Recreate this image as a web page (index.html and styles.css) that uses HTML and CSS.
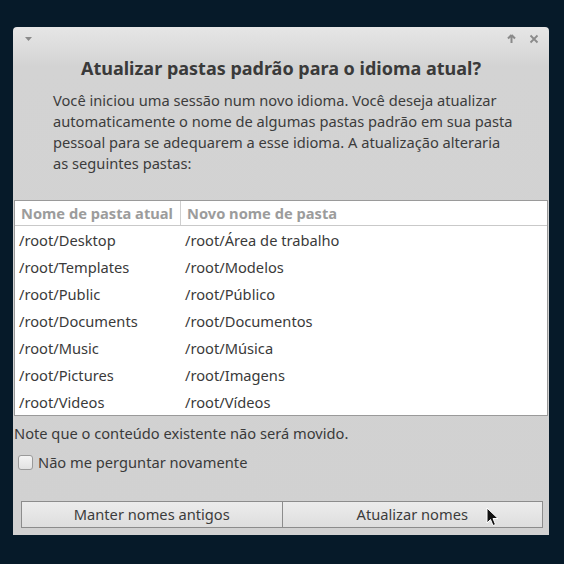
FILE: index.html
```html
<!DOCTYPE html>
<html lang="pt">
<head>
<meta charset="utf-8">
<link rel="stylesheet" href="styles.css">
</head>
<body>
<div class="desktop">
  <div class="window">
    <div class="titlebar">
      <svg class="menu-arrow" width="9" height="6" viewBox="0 0 9 6"><polygon points="1,1 8,1 4.5,5" fill="#8a8a8a"/></svg>
      <div class="tb-buttons">
        <svg width="9" height="10" viewBox="0 0 9 10"><path d="M4.5 1 L1 4.5 M4.5 1 L8 4.5 M4.5 1 V9" stroke="#8a8a8a" stroke-width="2" fill="none"/></svg>
        <svg width="10" height="10" viewBox="0 0 10 10"><path d="M1.5 1.5 L8.5 8.5 M8.5 1.5 L1.5 8.5" stroke="#8a8a8a" stroke-width="1.8" fill="none"/></svg>
      </div>
    </div>
    <h1 class="title">Atualizar pastas padrão para o idioma atual?</h1>
    <p class="message">Você iniciou uma sessão num novo idioma. Você deseja atualizar automaticamente o nome de algumas pastas padrão em sua pasta pessoal para se adequarem a esse idioma. A atualização alteraria as seguintes pastas:</p>
    <div class="table">
      <div class="row head"><div class="c1">Nome de pasta atual</div><div class="c2">Novo nome de pasta</div></div>
      <div class="row"><div class="c1">/root/Desktop</div><div class="c2">/root/Área de trabalho</div></div>
      <div class="row"><div class="c1">/root/Templates</div><div class="c2">/root/Modelos</div></div>
      <div class="row"><div class="c1">/root/Public</div><div class="c2">/root/Público</div></div>
      <div class="row"><div class="c1">/root/Documents</div><div class="c2">/root/Documentos</div></div>
      <div class="row"><div class="c1">/root/Music</div><div class="c2">/root/Música</div></div>
      <div class="row"><div class="c1">/root/Pictures</div><div class="c2">/root/Imagens</div></div>
      <div class="row"><div class="c1">/root/Videos</div><div class="c2">/root/Vídeos</div></div>
    </div>
    <p class="note">Note que o conteúdo existente não será movido.</p>
    <label class="check"><span class="box"></span>Não me perguntar novamente</label>
    <div class="buttons">
      <div class="btn">Manter nomes antigos</div>
      <div class="btn">Atualizar nomes</div>
    </div>
  </div>
  <svg class="cursor" width="14" height="21" viewBox="0 0 14 21"><path d="M1 1 V16 L4.5 12.5 L7 18.5 L9.5 17.5 L7 11.5 L12 11.5 Z" fill="#111" stroke="#fff" stroke-width="1"/></svg>
</div>
</body>
</html>
```
FILE: styles.css
```css
html, body {
  margin: 0;
  padding: 0;
}
body {
  background: #061a29;
  font-family: "Noto Sans", "Open Sans", sans-serif;
  color: #3a3a3a;
}
.desktop {
  position: relative;
  width: 564px;
  height: 564px;
  padding: 27px 0 0 13px;
  box-sizing: border-box;
}
.window {
  width: 536px;
  height: 508px;
  background: #d1d1d1;
  border-radius: 4px 4px 0 0;
  display: flex;
  flex-direction: column;
  background-image: linear-gradient(#e6e6e6 0, #d3d3d3 40px, #d1d1d1 100%);
}
.titlebar {
  height: 24px;
  display: flex;
  align-items: center;
  justify-content: space-between;
  padding: 0 10px 0 11px;
}
.tb-buttons {
  display: flex;
  gap: 13px;
  align-items: center;
}
.title {
  margin: 5px 0 0;
  font-size: 18px;
  line-height: 24px;
  font-weight: bold;
  text-align: center;
  color: #3a3a3a;
}
.message {
  margin: 10px 0 0 40px;
  width: 466px;
  font-size: 14.67px;
  line-height: 21px;
  color: #3c3c3c;
}
.table {
  margin: 26px 1px 0 1px;
  background: #fff;
  border: 1px solid #9a9a9a;
  font-size: 14.67px;
}
.row {
  display: flex;
  height: 27px;
  align-items: center;
}
.row.head {
  height: 24px;
  border-bottom: 1px solid #c9c9c9;
  font-weight: bold;
  color: #9c9c9c;
}
.c1 {
  width: 161px;
  padding-left: 4px;
}
.c2 {
  padding-left: 5px;
}
.head .c1 {
  padding-left: 6px;
  width: 159px;
  border-right: 1px solid #cfcfcf;
  height: 24px;
  line-height: 24px;
}
.head .c2 {
  padding-left: 6px;
}
.note {
  margin: 7px 0 0 1px;
  font-size: 14.67px;
  line-height: 20px;
}
.check {
  display: flex;
  align-items: center;
  margin: 9px 0 0 5px;
  font-size: 14.67px;
  line-height: 20px;
}
.box {
  width: 13px;
  height: 13px;
  border: 1px solid #9a9a9a;
  border-radius: 3px;
  background: linear-gradient(#f4f4f4, #e2e2e2);
  margin-right: 5px;
}
.buttons {
  display: flex;
  margin: auto 6px 7px 8px;
}
.btn {
  flex: 1;
  height: 25px;
  line-height: 25px;
  text-align: center;
  font-size: 14.67px;
  color: #3c3c3c;
  border: 1px solid #8c8c8c;
  background: linear-gradient(#ececec, #dedede);
}
.btn + .btn {
  border-left: none;
}
.cursor {
  position: absolute;
  left: 486px;
  top: 507px;
}
```
